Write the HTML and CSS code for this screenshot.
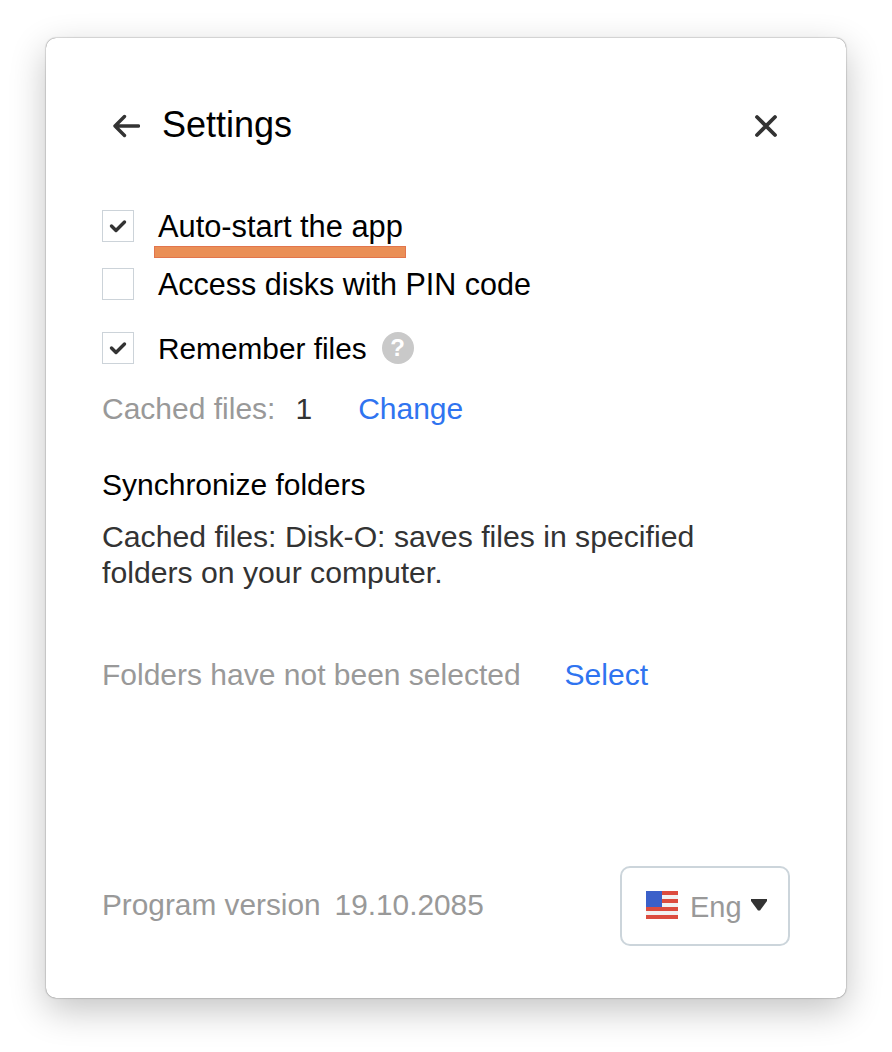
FILE: index.html
```html
<!DOCTYPE html>
<html lang="en">
<head>
<meta charset="utf-8">
<title>Settings</title>
<link rel="stylesheet" href="styles.css">
</head>
<body>
<main class="card">
  <header class="head">
    <svg class="back" width="28" height="24" viewBox="0 0 28 24"><path d="M26.500 12H3M12.500 2.500L3 12l9.500 9.500" fill="none" stroke="#333" stroke-width="3.400" stroke-linecap="round" stroke-linejoin="round"/></svg>
    <h1 class="title">Settings</h1>
    <svg class="close" width="24" height="24" viewBox="0 0 24 24"><path d="M3 3l18 18M21 3L3 21" fill="none" stroke="#333" stroke-width="3.800" stroke-linecap="round"/></svg>
  </header>

  <div class="row row-first">
    <span class="box"><svg width="30" height="30" viewBox="0 0 30 30"><path d="M8.500 15l4.500 4.500 8.500-8.500" fill="none" stroke="#333" stroke-width="3.400" stroke-linecap="round" stroke-linejoin="round"/></svg></span>
    <span class="label label-auto">Auto-start the app<i class="mark"></i></span>
  </div>
  <div class="row row-second">
    <span class="box"></span>
    <span class="label label-pin">Access disks with PIN code</span>
  </div>
  <div class="row row-third">
    <span class="box"><svg width="30" height="30" viewBox="0 0 30 30"><path d="M8.500 15l4.500 4.500 8.500-8.500" fill="none" stroke="#333" stroke-width="3.400" stroke-linecap="round" stroke-linejoin="round"/></svg></span>
    <span class="label label-files">Remember files</span>
    <span class="help">?</span>
  </div>

  <div class="cached">
    <span class="muted">Cached files:</span>
    <span class="count">1</span>
    <a class="link">Change</a>
  </div>

  <h2 class="subhead">Synchronize folders</h2>
  <p class="desc">Cached files: Disk-O: saves files in specified<br>folders on your computer.</p>

  <div class="folders">
    <span class="muted">Folders have not been selected</span>
    <a class="link">Select</a>
  </div>

  <footer class="foot">
    <div class="version">
      <span class="muted">Program version</span>
      <span class="muted">19.10.2085</span>
    </div>
    <button class="lang">
      <svg class="flag" width="32" height="28" viewBox="0 0 32 28">
        <rect width="32" height="28" fill="#f2f2f2"/>
        <rect y="0" width="32" height="4" fill="#dc4c3f"/>
        <rect y="8" width="32" height="4" fill="#dc4c3f"/>
        <rect y="16" width="32" height="4" fill="#dc4c3f"/>
        <rect y="24" width="32" height="4" fill="#dc4c3f"/>
        <rect width="16" height="16" fill="#3b60c9"/>
      </svg>
      <span class="lang-text">Eng</span>
      <svg class="caret" width="16" height="12" viewBox="0 0 16 12"><path d="M0 0h16v2L9 11.500H7L0 2z" fill="#333"/></svg>
    </button>
  </footer>
</main>
</body>
</html>
```

FILE: styles.css
```css
* { box-sizing: border-box; }

html, body {
  margin: 0;
  height: 100%;
  background: #fff;
}

body {
  padding: 38px 46px 54px;
  font-family: "Liberation Sans", Arial, sans-serif;
  font-size: 30px;
  color: #000;
  overflow: hidden;
}

.card {
  width: 800px;
  height: 960px;
  padding: 0 56px;
  background: #fff;
  border-radius: 10px;
  display: flex;
  flex-direction: column;
  box-shadow: 0 0 1px rgba(0, 0, 0, 0.55), 0 0 2px rgba(0, 0, 0, 0.25), 0 12px 36px rgba(0, 0, 0, 0.24);
}

.head {
  display: flex;
  align-items: center;
  height: 48px;
  margin-top: 64px;
}

.back { margin-left: 10px; }

.title {
  margin: -3px 0 0 22px;
  font-size: 36px;
  font-weight: 400;
  line-height: 48px;
}

.close {
  margin-left: auto;
  margin-right: 12px;
}

.row {
  display: flex;
  align-items: center;
  height: 32px;
}

.row-first { margin-top: 60px; }
.row-second { margin-top: 26px; }
.row-third { margin-top: 32px; }

.box {
  flex: none;
  width: 32px;
  height: 32px;
  background: #fff;
  border: 1px solid #ccd3d9;
  display: flex;
  align-items: center;
  justify-content: center;
}

.label {
  position: relative;
  margin-left: 24px;
  line-height: 32px;
  white-space: nowrap;
}

.label-auto {
  font-size: 30.800px;
  top: 1px;
}

.label-pin { font-size: 30.500px; }

.label-files {
  font-size: 29.800px;
  top: 1px;
}

.mark {
  position: absolute;
  left: -4px;
  top: 35px;
  width: 252px;
  height: 12px;
  background: #ea8f56;
  border: 1px solid #e2754d;
}

.help {
  flex: none;
  width: 32px;
  height: 32px;
  margin-left: 15px;
  border-radius: 50%;
  background: #c9c9c9;
  color: #fff;
  font-size: 24px;
  font-weight: 700;
  line-height: 32px;
  text-align: center;
}

.cached {
  display: flex;
  align-items: center;
  height: 36px;
  margin-top: 27px;
}

.muted {
  color: #999;
  white-space: nowrap;
}

.count {
  margin-left: 20px;
  color: #333;
}

.cached .link { margin-left: 46px; }

.link {
  color: #2f74f0;
  white-space: nowrap;
}

.subhead {
  margin: 40px 0 0;
  font-size: 30px;
  font-weight: 400;
  line-height: 36px;
}

.desc {
  margin: 16px 0 0;
  color: #333;
  font-size: 30.200px;
  line-height: 36px;
}

.folders {
  display: flex;
  align-items: center;
  height: 36px;
  margin-top: 66px;
}

.folders .link { margin-left: 44px; }

.foot {
  display: flex;
  align-items: center;
  justify-content: space-between;
  margin-top: auto;
  margin-bottom: 52px;
}

.version {
  display: flex;
  gap: 14px;
  margin-top: -2px;
  font-size: 29.800px;
}

.lang {
  width: 170px;
  height: 80px;
  padding: 0 0 0 24px;
  background: #fff;
  border: 2px solid #ccd5db;
  border-radius: 10px;
  display: flex;
  align-items: center;
  font: inherit;
}

.flag { flex: none; margin-top: -2px; }

.lang-text {
  margin-left: 12px;
  color: #999;
  font-size: 29px;
  margin-top: 2px;
}

.caret {
  flex: none;
  margin-left: 9px;
  margin-top: -2px;
}
```
